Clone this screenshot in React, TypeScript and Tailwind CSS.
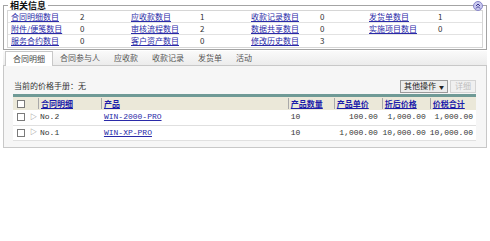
import React from 'react'

const font = { fontFamily: '"Noto Sans CJK SC", "Liberation Sans", sans-serif' }

const stats = [
  [
    ['合同明细数目', '2'],
    ['应收款数目', '1'],
    ['收款记录数目', '0'],
    ['发货单数目', '1'],
  ],
  [
    ['附件/便笺数目', '0'],
    ['审核流程数目', '2'],
    ['数据共享数目', '0'],
    ['实施项目数目', '0'],
  ],
  [
    ['服务合约数目', '0'],
    ['客户资产数目', '0'],
    ['修改历史数目', '3'],
  ],
]

const tabs = ['合同明细', '合同参与人', '应收款', '收款记录', '发货单', '活动']

const rows = [
  { no: 'No.2', product: 'WIN-2000-PRO', qty: '10', price: '100.00', discount: '1,000.00', total: '1,000.00' },
  { no: 'No.1', product: 'WIN-XP-PRO', qty: '10', price: '1,000.00', discount: '10,000.00', total: '10,000.00' },
]

function Check() {
  return <span className="inline-block w-[8px] h-[8px] border border-[#7a7a7a] bg-white align-middle" />
}

function HeadCell({ label, w }: { label: string; w: string }) {
  return (
    <th className={`${w} p-0 text-left font-bold`}>
      <div className="flex items-center h-[13px]">
        <span className="w-px h-[11px] bg-[#a9a9a9] mr-[2px]" />
        <span className="text-[#1c1caa] underline">{label}</span>
      </div>
    </th>
  )
}

export default function App() {
  return (
    <div className="w-[490px] h-[241px] bg-white text-[8px] leading-none text-[#222] overflow-hidden" style={font}>
      {/* related info box */}
      <div className="pt-[5px] px-[3px]">
        <div className="relative border border-[#a4a4a4] px-[3px] pt-[4px] pb-[1px]">
          <span className="absolute -top-[5px] left-[4px] px-[2px] bg-white font-bold text-[9px] leading-[9px] text-[#111]">相关信息</span>
          <span className="absolute -top-[5px] right-[3px] w-[10px] h-[10px] rounded-full bg-[#c9c8ef] border border-[#8886c9] flex items-center justify-center">
            <svg width="6" height="6" viewBox="0 0 6 6" fill="none" stroke="#3a3890" strokeWidth="1">
              <path d="M1 3 L3 1 L5 3 M1 5.5 L3 3.5 L5 5.5" />
            </svg>
          </span>
          <div className="border border-[#d6d6d6]">
            {stats.map((row, i) => (
              <div key={i} className={`grid grid-cols-[70px_50px_70px_50px_70px_48px_70px_1fr] h-[12px] items-center ${i < 2 ? 'border-b border-[#e2e2e2]' : ''}`}>
                {row.map(([label, val]) => (
                  <React.Fragment key={label}>
                    <span className="pl-[3px] text-[#2a2aa8] underline whitespace-nowrap">{label}</span>
                    <span className="pl-[2px] text-[#333]">{val}</span>
                  </React.Fragment>
                ))}
              </div>
            ))}
          </div>
        </div>
      </div>

      {/* tabs */}
      <div className="px-[3px] mt-[1px]">
        <div className="flex items-end h-[15px] bg-gradient-to-b from-[#fafafa] to-[#ececec] border-b border-[#c8c8c8]">
          {tabs.map((t, i) => (
            <span
              key={t}
              className={
                i === 0
                  ? 'h-[15px] px-[7px] flex items-center bg-white border border-b-0 border-[#c8c8c8] ml-[2px] -mb-px text-[#444]'
                  : 'h-[14px] px-[7px] flex items-center text-[#555]'
              }
            >
              {t}
            </span>
          ))}
        </div>
        <div className="bg-[#f6f6f6] border border-t-0 border-[#c8c8c8] h-[82px] pl-[9px] pr-[10px] pt-[13px]">
          <div className="flex items-center justify-between h-[14px]">
            <span className="text-[#333] pl-px">当前的价格手册：无</span>
            <div className="flex items-center gap-[2px]">
              <span className="h-[13px] px-[3px] flex items-center gap-[3px] bg-[#ececec] border border-[#9a9a9a] text-[#222]">
                其他操作<span className="text-[5px]">▼</span>
              </span>
              <span className="h-[13px] px-[4px] flex items-center bg-[#f0f0f0] border border-[#d4d4d4] text-[#bdbdbd]">详细</span>
            </div>
          </div>
          <div className="mt-[1px] border-t-[3px] border-[#6f9a96]">
            <table className="w-full border-collapse bg-white">
              <thead>
                <tr className="bg-[#ebe8d9]">
                  <th className="w-[25px] h-[13px] pl-[4px] text-left"><Check /></th>
                  <HeadCell label="合同明细" w="w-[63px]" />
                  <HeadCell label="产品" w="w-[187px]" />
                  <HeadCell label="产品数量" w="w-[46px]" />
                  <HeadCell label="产品单价" w="w-[48px]" />
                  <HeadCell label="折后价格" w="w-[48px]" />
                  <HeadCell label="价税合计" w="" />
                </tr>
              </thead>
              <tbody style={{ fontFamily: '"Liberation Mono", "Noto Sans CJK SC", monospace' }}>
                {rows.map((r) => (
                  <tr key={r.no} className="h-[15px] border-b border-[#e0e0e0]">
                    <td className="pl-[4px]">
                      <span className="flex items-center gap-[5px]">
                        <Check />
                        <span className="text-[#777] text-[7px]">▷</span>
                      </span>
                    </td>
                    <td className="pl-[2px] text-[#333]">{r.no}</td>
                    <td className="pl-[3px] text-[#2a2aa8] underline">{r.product}</td>
                    <td className="pl-[3px] text-[#333]">{r.qty}</td>
                    <td className="pr-[4px] text-right text-[#333]">{r.price}</td>
                    <td className="pr-[4px] text-right text-[#333]">{r.discount}</td>
                    <td className="pr-[3px] text-right text-[#333]">{r.total}</td>
                  </tr>
                ))}
              </tbody>
            </table>
          </div>
        </div>
      </div>
    </div>
  )
}
